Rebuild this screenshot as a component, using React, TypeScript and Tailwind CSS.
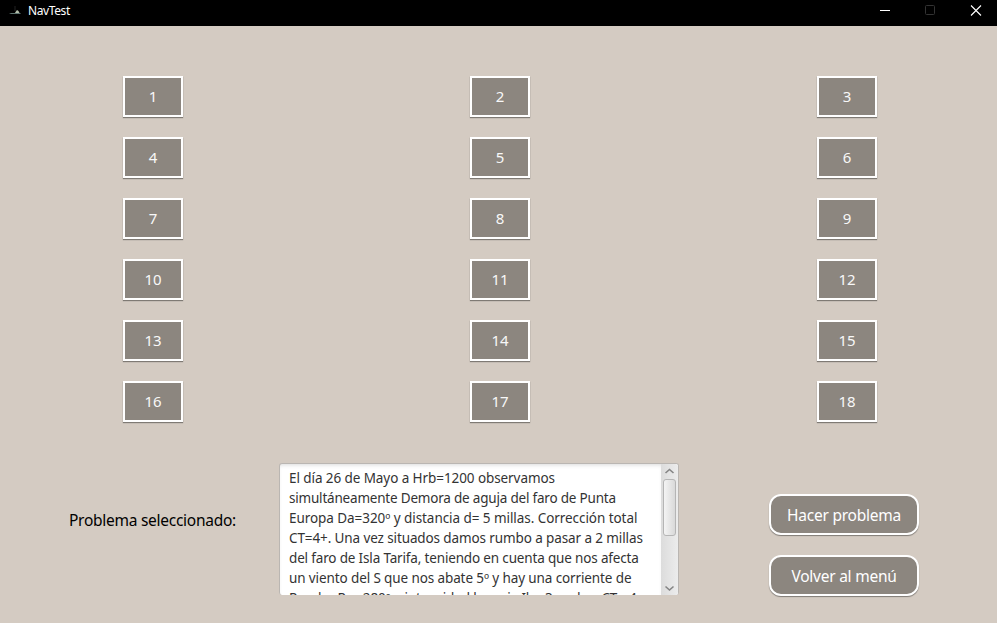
import React from "react";

const problems = Array.from({ length: 18 }, (_, i) => i + 1);

const lines: { text: string; spacing: string }[] = [
  { text: "El día 26 de Mayo a Hrb=1200 observamos", spacing: "tracking-[-0.08px]" },
  { text: "simultáneamente Demora de aguja del faro de Punta", spacing: "tracking-[-0.2px]" },
  { text: "Europa Da=320º y distancia d= 5 millas. Corrección total", spacing: "tracking-[-0.06px]" },
  { text: "CT=4+. Una vez situados damos rumbo a pasar a 2 millas", spacing: "tracking-[-0.11px]" },
  { text: "del faro de Isla Tarifa, teniendo en cuenta que nos afecta", spacing: "tracking-[-0.16px]" },
  { text: "un viento del S que nos abate 5º y hay una corriente de", spacing: "tracking-[-0.11px]" },
  { text: "Rumbo Rc= 280º e intensidad horaria Ih= 3 nudos. CT=-4", spacing: "tracking-[-0.16px]" },
];

function TitleBar() {
  return (
    <header className="flex h-[26px] items-start bg-black text-white">
      <svg className="mt-[5px] ml-[8px] h-3 w-3.5" viewBox="0 0 14 12">
        <path d="M1 8h12l-1 1H3z" fill="#5f7570" />
        <path d="M7.5 7l1.5-2 1.500 1 1 2H7z" fill="#b5c0ac" />
        <path d="M7 1v5" stroke="#222" />
      </svg>
      <span className="ml-[6px] mt-[3px] text-[12px] leading-4 tracking-[-0.4px]">NavTest</span>
      <div className="ml-auto flex">
        <svg className="h-[22px] w-[117px]" viewBox="0 0 117 22" fill="none">
          <path d="M0 10.5h10" stroke="#fff" />
          <rect x="45.5" y="5.5" width="9" height="9" rx="1" stroke="#333" />
          <path d="M91 5.500l10 10M101 5.500l-10 10" stroke="#fff" strokeWidth="1.1" />
        </svg>
      </div>
    </header>
  );
}

function ActionButton({ children }: { children: React.ReactNode }) {
  return (
    <button className="h-[41px] w-[150px] rounded-[12px] border-2 border-white bg-[#8c867f] text-[15.5px] leading-[38px] text-white shadow-[0_1px_1px_rgba(0,0,0,0.4)]">
      {children}
    </button>
  );
}

function ScrollBar() {
  return (
    <div className="flex w-[17px] shrink-0 flex-col items-center bg-linear-to-r from-[#dcdcdc] to-[#ececec]">
      <svg className="h-[15px] w-[11px] shrink-0" viewBox="0 0 11 15" fill="none">
        <path d="M1.500 9l4-3.500 4 3.500" stroke="#858585" strokeWidth="1.6" />
      </svg>
      <div className="h-[57px] w-[13px] shrink-0 rounded-[3px] border border-[#b5b5b5] bg-linear-to-r from-[#f4f4f4] to-[#d9d9d9]" />
      <svg className="mt-auto h-[15px] w-[11px] shrink-0" viewBox="0 0 11 15" fill="none">
        <path d="M1.500 6.500l4 3.500 4-3.500" stroke="#858585" strokeWidth="1.6" />
      </svg>
    </div>
  );
}

export default function App() {
  return (
    <div className="flex h-[623px] w-[997px] flex-col overflow-hidden bg-[#d4cbc2] font-['Noto_Sans','Open_Sans',sans-serif]">
      <TitleBar />
      <main className="flex flex-col">
        <div className="ml-[123px] mt-[50px] grid w-[754px] grid-cols-[60px_60px_60px] justify-between gap-y-5">
          {problems.map((n) => (
            <button
              key={n}
              className="h-[41px] border-2 border-white bg-[#8c867f] text-[15px] leading-[37px] tracking-[-0.1px] text-[#f8f8f8] shadow-[0_1px_1px_rgba(0,0,0,0.4)]"
            >
              {n}
            </button>
          ))}
        </div>
        <div className="mt-[41px] flex items-start">
          <div className="ml-[69px] mt-[45px] w-[210px] whitespace-nowrap text-[15.5px] leading-6 text-black">
            <span className="tracking-[-0.27px]">Problema seleccionado:</span>
          </div>
          <div className="flex h-[132px] w-[400px] overflow-hidden rounded-[3px] border border-b-0 border-[#bab6b2] bg-white">
            <div className="min-w-0 flex-1 overflow-hidden whitespace-nowrap pl-[9px] pt-[4px] text-[13.5px] leading-5 text-[#333] shadow-[inset_0_3px_4px_-2px_rgba(0,0,0,0.15)]">
              {lines.map((l) => (
                <div key={l.text}>
                  <span className={l.spacing}>{l.text}</span>
                </div>
              ))}
            </div>
            <ScrollBar />
          </div>
          <div className="ml-[90px] mt-[31px] flex flex-col gap-5">
            <ActionButton>
              <span className="tracking-[-0.24px]">Hacer problema</span>
            </ActionButton>
            <ActionButton>
              <span className="tracking-[-0.24px]">Volver al menú</span>
            </ActionButton>
          </div>
        </div>
      </main>
    </div>
  );
}
